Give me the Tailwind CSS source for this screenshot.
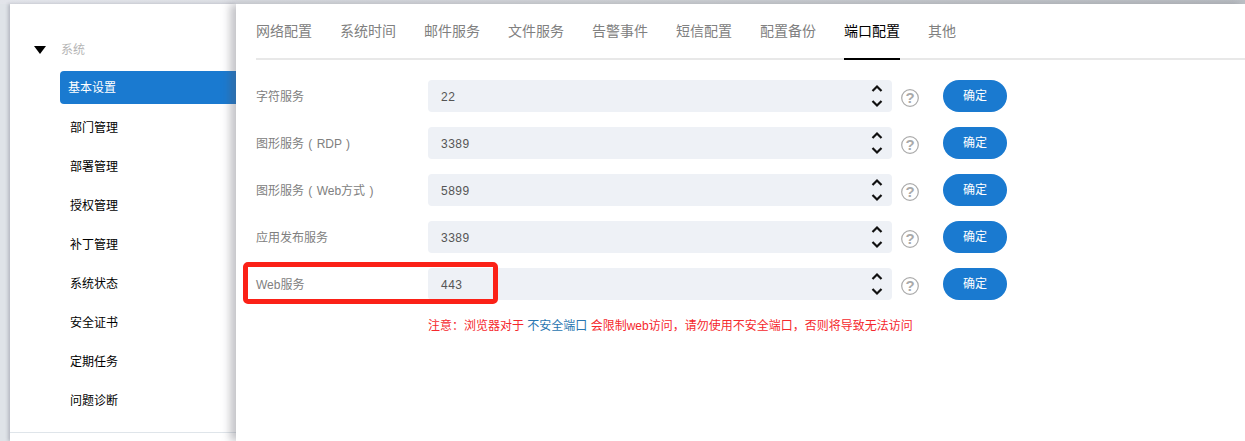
<!DOCTYPE html>
<html lang="en">
  <head>
    <meta charset="UTF-8" />
    <title>端口配置</title>
    <script src="https://cdn.jsdelivr.net/npm/@tailwindcss/browser@4"></script>
  </head>
  <body class="h-[441px] w-[1245px] overflow-hidden bg-[#dfe3e8] font-['Liberation_Sans','Noto_Sans_CJK_SC',sans-serif]">
    <div class="relative h-[441px]">
      <div class="h-[4px] bg-gradient-to-r from-[#e2e4ea] via-[#d3d6da] to-[#bcc0c5]"></div>
      <div class="flex h-[437px] pl-[10px]">
        <!-- sidebar -->
        <aside class="flex h-full w-[226px] flex-col bg-white shadow-[-2px_0_3px_rgba(90,90,110,0.3)]">
          <div class="mt-[37px] flex h-[18px] items-center pl-[24px] text-xs text-[#b5b5b5]">
            <span class="h-0 w-0 border-x-[6px] border-t-[8px] border-x-transparent border-t-black"></span>
            <span class="ml-[15px]">系统</span>
          </div>
          <nav class="mt-[12px] flex flex-col pl-[50px] text-xs text-black">
            <a class="flex h-[33px] items-center rounded-l-[4px] bg-[#1a7ad0] pl-[8px] text-white">基本设置</a>
            <a class="mt-[4px] flex h-[39px] items-center pl-[10px]">部门管理</a>
            <a class="flex h-[39px] items-center pl-[10px]">部署管理</a>
            <a class="flex h-[39px] items-center pl-[10px]">授权管理</a>
            <a class="flex h-[39px] items-center pl-[10px]">补丁管理</a>
            <a class="flex h-[39px] items-center pl-[10px]">系统状态</a>
            <a class="flex h-[39px] items-center pl-[10px]">安全证书</a>
            <a class="flex h-[39px] items-center pl-[10px]">定期任务</a>
            <a class="flex h-[39px] items-center pl-[10px]">问题诊断</a>
          </nav>
          <div class="mt-[12px] border-t border-[#dfe5ea]"></div>
        </aside>

        <!-- main panel -->
        <main class="relative flex-1 bg-white pl-[20px] shadow-[-6px_0_8px_rgba(90,90,100,0.35)]">
          <div class="flex h-[56px] gap-[28px] border-b-2 border-[#e8e8e8] text-sm text-[#808080]">
            <span class="flex h-[56px] items-center border-b-2 border-transparent">网络配置</span>
            <span class="flex h-[56px] items-center border-b-2 border-transparent">系统时间</span>
            <span class="flex h-[56px] items-center border-b-2 border-transparent">邮件服务</span>
            <span class="flex h-[56px] items-center border-b-2 border-transparent">文件服务</span>
            <span class="flex h-[56px] items-center border-b-2 border-transparent">告警事件</span>
            <span class="flex h-[56px] items-center border-b-2 border-transparent">短信配置</span>
            <span class="flex h-[56px] items-center border-b-2 border-transparent">配置备份</span>
            <span class="flex h-[56px] items-center border-b-2 border-black text-black">端口配置</span>
            <span class="flex h-[56px] items-center border-b-2 border-transparent">其他</span>
          </div>

          <div class="mt-[20px] flex flex-col gap-[15px] text-xs">
            <div class="flex h-[32px] items-center">
              <label class="w-[172px] pt-[2px] text-[#808080] [word-spacing:1px]">字符服务</label>
              <div class="flex h-[32px] w-[464px] items-center rounded-[4px] bg-[#eef1f6] pl-[13px] tracking-[0.5px] text-[#555]">
                <span class="flex-1 pt-[2px]">22</span>
                <svg class="mr-[9px]" width="12" height="26" viewBox="0 0 12 26" fill="none" stroke="#111" stroke-width="2.2"><path d="M1.5 8 6 3.5 10.5 8M1.5 18 6 22.5 10.5 18" /></svg>
              </div>
              <svg class="ml-[9px] mt-[4px]" width="18" height="18" viewBox="0 0 18 18"><circle cx="9" cy="9" r="8.3" fill="none" stroke="#aaa" stroke-width="1.2" /><text x="9" y="14" text-anchor="middle" font-size="15" font-weight="700" fill="#aaa">?</text></svg>
              <button class="ml-[24px] h-[32px] w-[64px] rounded-full bg-[#1a7ad0] text-white">确定</button>
            </div>
            <div class="flex h-[32px] items-center">
              <label class="w-[172px] pt-[2px] text-[#808080] [word-spacing:1px]">图形服务 ( RDP )</label>
              <div class="flex h-[32px] w-[464px] items-center rounded-[4px] bg-[#eef1f6] pl-[13px] tracking-[0.5px] text-[#555]">
                <span class="flex-1 pt-[2px]">3389</span>
                <svg class="mr-[9px]" width="12" height="26" viewBox="0 0 12 26" fill="none" stroke="#111" stroke-width="2.2"><path d="M1.5 8 6 3.5 10.5 8M1.5 18 6 22.5 10.5 18" /></svg>
              </div>
              <svg class="ml-[9px] mt-[4px]" width="18" height="18" viewBox="0 0 18 18"><circle cx="9" cy="9" r="8.3" fill="none" stroke="#aaa" stroke-width="1.2" /><text x="9" y="14" text-anchor="middle" font-size="15" font-weight="700" fill="#aaa">?</text></svg>
              <button class="ml-[24px] h-[32px] w-[64px] rounded-full bg-[#1a7ad0] text-white">确定</button>
            </div>
            <div class="flex h-[32px] items-center">
              <label class="w-[172px] pt-[2px] text-[#808080] [word-spacing:1px]">图形服务 ( Web方式 )</label>
              <div class="flex h-[32px] w-[464px] items-center rounded-[4px] bg-[#eef1f6] pl-[13px] tracking-[0.5px] text-[#555]">
                <span class="flex-1 pt-[2px]">5899</span>
                <svg class="mr-[9px]" width="12" height="26" viewBox="0 0 12 26" fill="none" stroke="#111" stroke-width="2.2"><path d="M1.5 8 6 3.5 10.5 8M1.5 18 6 22.5 10.5 18" /></svg>
              </div>
              <svg class="ml-[9px] mt-[4px]" width="18" height="18" viewBox="0 0 18 18"><circle cx="9" cy="9" r="8.3" fill="none" stroke="#aaa" stroke-width="1.2" /><text x="9" y="14" text-anchor="middle" font-size="15" font-weight="700" fill="#aaa">?</text></svg>
              <button class="ml-[24px] h-[32px] w-[64px] rounded-full bg-[#1a7ad0] text-white">确定</button>
            </div>
            <div class="flex h-[32px] items-center">
              <label class="w-[172px] pt-[2px] text-[#808080] [word-spacing:1px]">应用发布服务</label>
              <div class="flex h-[32px] w-[464px] items-center rounded-[4px] bg-[#eef1f6] pl-[13px] tracking-[0.5px] text-[#555]">
                <span class="flex-1 pt-[2px]">3389</span>
                <svg class="mr-[9px]" width="12" height="26" viewBox="0 0 12 26" fill="none" stroke="#111" stroke-width="2.2"><path d="M1.5 8 6 3.5 10.5 8M1.5 18 6 22.5 10.5 18" /></svg>
              </div>
              <svg class="ml-[9px] mt-[4px]" width="18" height="18" viewBox="0 0 18 18"><circle cx="9" cy="9" r="8.3" fill="none" stroke="#aaa" stroke-width="1.2" /><text x="9" y="14" text-anchor="middle" font-size="15" font-weight="700" fill="#aaa">?</text></svg>
              <button class="ml-[24px] h-[32px] w-[64px] rounded-full bg-[#1a7ad0] text-white">确定</button>
            </div>
            <div class="flex h-[32px] items-center">
              <label class="w-[172px] pt-[2px] text-[#808080] [word-spacing:1px]">Web服务</label>
              <div class="flex h-[32px] w-[464px] items-center rounded-[4px] bg-[#eef1f6] pl-[13px] tracking-[0.5px] text-[#555]">
                <span class="flex-1 pt-[2px]">443</span>
                <svg class="mr-[9px]" width="12" height="26" viewBox="0 0 12 26" fill="none" stroke="#111" stroke-width="2.2"><path d="M1.5 8 6 3.5 10.5 8M1.5 18 6 22.5 10.5 18" /></svg>
              </div>
              <svg class="ml-[9px] mt-[4px]" width="18" height="18" viewBox="0 0 18 18"><circle cx="9" cy="9" r="8.3" fill="none" stroke="#aaa" stroke-width="1.2" /><text x="9" y="14" text-anchor="middle" font-size="15" font-weight="700" fill="#aaa">?</text></svg>
              <button class="ml-[24px] h-[32px] w-[64px] rounded-full bg-[#1a7ad0] text-white">确定</button>
            </div>
          </div>

          <p class="mt-[18px] pl-[172px] text-xs text-[#f5282d]">注意：浏览器对于 <span class="text-[#2a76b0]">不安全端口</span> 会限制web访问，请勿使用不安全端口，否则将导致无法访问</p>
        </main>
      </div>

      <!-- annotation drawn over the page -->
      <div class="absolute left-[243px] top-[262px] h-[42px] w-[255px] rounded-[5px] border-[5px] border-[#fb2117]"></div>
    </div>
  </body>
</html>
